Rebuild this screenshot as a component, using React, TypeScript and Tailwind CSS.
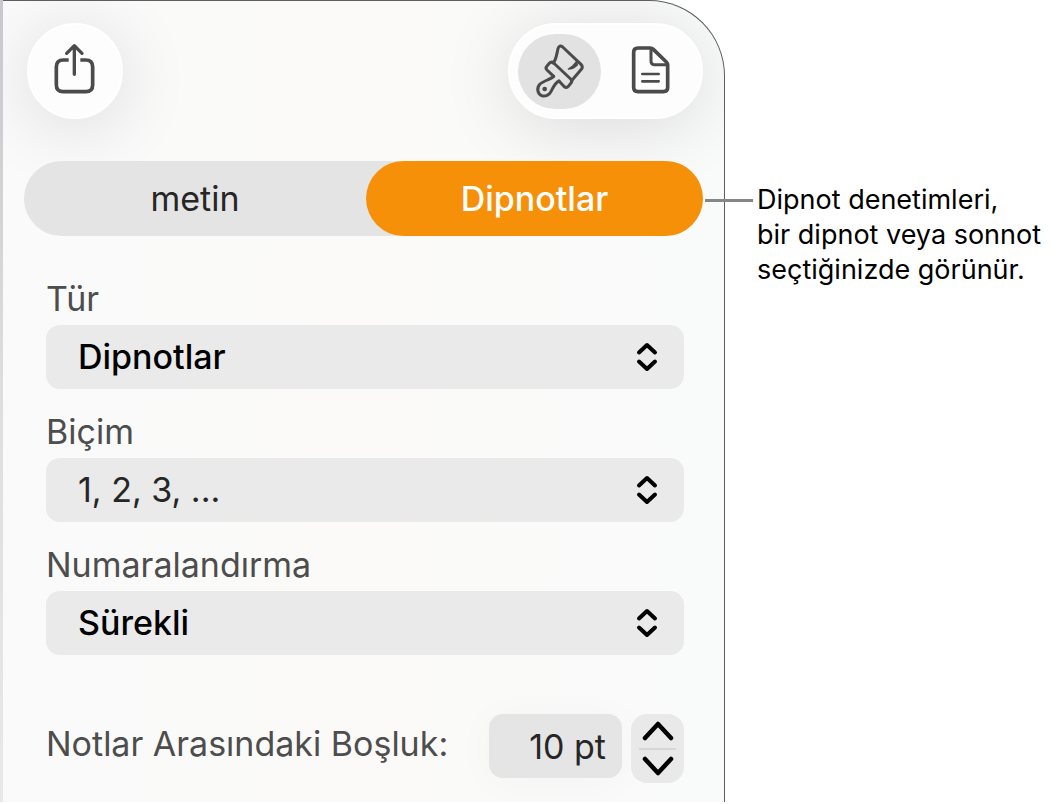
import React, { useState } from "react";

const ShareIcon = () => (
  <svg
    viewBox="162 129 126 168"
    className="w-[42px] h-[56px]"
    fill="none"
    stroke="#4b4b4b"
    strokeWidth="11"
    strokeLinecap="round"
    strokeLinejoin="round"
    aria-hidden="true">
    <path
      d="M206 180H190Q169 180 169 201V254Q169 275 190 275H257Q278 275 278 254V201Q278 180 257 180H241"
      strokeLinecap="butt"
    />
    <path d="M223 223V138M200 160L223 137L246 160" strokeWidth="10" />
  </svg>
);

const BrushIcon = () => (
  <svg
    viewBox="135 130 150 165"
    className="w-[50px] h-[55px]"
    fill="none"
    stroke="#4b4b4b"
    strokeWidth="9"
    strokeLinecap="round"
    strokeLinejoin="round"
    aria-hidden="true">
    <path d="M190 187C199 176 200 160 204 144Q208 131 218 139L273 191Q280 198 274 206L246 239" />
    <path d="M191 227L171 208Q165 202 171 196L178 188Q184 181 191 187L242 235Q248 241 243 247L235 257Q229 264 223 258L207 241" />
    <path d="M191 227C182 236 160 241 150 250C139 261 142 279 155 285C166 289 178 283 183 273C189 261 195 246 207 241" />
    <circle cx="164" cy="265" r="7" fill="#4b4b4b" stroke="none" />
    <path d="M260 182L247 197L235 205Q250 205 262 193Z" fill="#4b4b4b" strokeWidth="4" />
  </svg>
);

const DocumentIcon = () => (
  <svg
    viewBox="423 138 120 150"
    className="w-[40px] h-[50px]"
    fill="none"
    stroke="#4b4b4b"
    strokeWidth="11"
    strokeLinecap="round"
    strokeLinejoin="round"
    aria-hidden="true">
    <path d="M444 144H481Q486 144 490 148L529 186Q533 190 533 195V262Q533 275 520 275H444Q431 275 431 262V157Q431 144 444 144Z" />
    <path d="M483 146V184Q483 194 492 194H531" strokeWidth="9" />
    <path d="M457 222H506M457 244H506" strokeWidth="8" />
  </svg>
);

const UpDownIcon = () => (
  <svg
    viewBox="0 0 22 30"
    className="pointer-events-none absolute right-[26px] top-[17px] w-[22px] h-[30px]"
    fill="none"
    stroke="#000"
    strokeWidth="4"
    strokeLinecap="round"
    strokeLinejoin="round"
    aria-hidden="true">
    <path d="M3 10.5L11 3L19 10.5M3 19.5L11 27L19 19.5" />
  </svg>
);

type SelectFieldProps = {
  id: string;
  label: string;
  options: string[];
  className?: string;
};

const SelectField = ({ id, label, options, className = "" }: SelectFieldProps) => (
  <div>
    <label
      htmlFor={id}
      className="block mb-1.5 text-[34px] leading-[40px] text-[#4d4d4d]">
      {label}
    </label>
    <div className="relative">
      <select
        id={id}
        className={`block appearance-none w-full h-16 pl-8 pr-16 rounded-[14px] bg-[#e9eae9] text-[34px] leading-[40px] ${className}`}>
        {options.map((option) => (
          <option key={option}>{option}</option>
        ))}
      </select>
      <UpDownIcon />
    </div>
  </div>
);

const Toolbar = () => (
  <div className="flex justify-between pl-[3px]">
    <button
      type="button"
      aria-label="Paylaş"
      className="flex items-center justify-center size-24 rounded-full bg-[#fdfdfd] border-2 border-white shadow-[0_8px_70px_rgba(0,0,0,0.13)]">
      <ShareIcon />
    </button>
    <div className="flex items-center gap-2 h-24 px-2 rounded-full bg-[#fdfdfd] border-2 border-white shadow-[0_8px_70px_rgba(0,0,0,0.13)]">
      <button
        type="button"
        aria-label="Biçim"
        aria-pressed="true"
        className="flex items-center justify-center w-[83px] h-[75px] rounded-full bg-[#e2e2e2]">
        <BrushIcon />
      </button>
      <button
        type="button"
        aria-label="Belge"
        className="flex items-center justify-center w-[84px] h-[75px] rounded-full">
        <DocumentIcon />
      </button>
    </div>
  </div>
);

const App = () => {
  const [spacing, setSpacing] = useState(10);

  return (
    <div className="flex items-start bg-white font-['Inter','Liberation_Sans',sans-serif]">
      <div className="flex flex-1">
        <div className="w-[3px] bg-linear-to-b from-[#c8c8cd] via-[#dededf] to-[#e8e8e8]" />
        <main className="flex-1 overflow-hidden pt-[22px] pb-[19px] pl-[21px] pr-[21px] border-t border-r border-[#5e5e5e] rounded-tr-[76px] bg-linear-to-r from-[#fafafa] via-[#fbfaf9] to-[#f9fafa]">
          <Toolbar />
          <div className="relative flex mt-[42px] h-[75px] rounded-full bg-[#e4e4e4] text-[34px] leading-[40px]">
            <button type="button" className="flex-1 text-[#262626]">
              metin
            </button>
            <button
              type="button"
              className="w-[337px] rounded-full bg-[#f79009] font-medium text-white">
              Dipnotlar
            </button>
          </div>
          <div className="flex flex-col gap-[23px] mt-[43px] pl-[22px] pr-[19px]">
            <SelectField
              id="type"
              label="Tür"
              options={["Dipnotlar", "Sonnotlar"]}
              className="font-medium text-black"
            />
            <SelectField
              id="format"
              label="Biçim"
              options={["1, 2, 3, ...", "i, ii, iii, ..."]}
              className="text-[#262626]"
            />
            <SelectField
              id="numbering"
              label="Numaralandırma"
              options={["Sürekli", "Her Sayfada"]}
              className="font-medium text-black"
            />
          </div>
          <div className="flex items-start mt-[59px] pl-[22px] pr-[19px]">
            <label
              htmlFor="spacing"
              className="flex-1 pt-2.5 whitespace-nowrap text-[34px] leading-[40px] text-[#4d4d4d]">
              Notlar Arasındaki Boşluk:
            </label>
            <input
              id="spacing"
              type="text"
              readOnly
              value={`${spacing} pt`}
              className="w-[133px] h-16 pr-4 rounded-[14px] bg-[#e5e5e5] text-right text-[34px] leading-[40px] text-[#262626] shadow-[0_4px_40px_rgba(0,0,0,0.03)]"
            />
            <div className="flex flex-col items-center ml-[9px] w-[53px] h-[69px] rounded-[16px] bg-[#e9e9e9]">
              <button
                type="button"
                aria-label="Artır"
                onClick={() => setSpacing(spacing + 1)}
                className="flex-1 flex items-center justify-center w-full">
                <svg viewBox="0 0 32 20" className="w-8 h-5" fill="none" stroke="#000" strokeWidth="4.5" strokeLinecap="round" strokeLinejoin="round" aria-hidden="true">
                  <path d="M3 17L16 3L29 17" />
                </svg>
              </button>
              <div className="w-[37px] h-0.5 bg-[#d6d6d6]" />
              <button
                type="button"
                aria-label="Azalt"
                onClick={() => setSpacing(spacing - 1)}
                className="flex-1 flex items-center justify-center w-full">
                <svg viewBox="0 0 32 20" className="w-8 h-5" fill="none" stroke="#000" strokeWidth="4.5" strokeLinecap="round" strokeLinejoin="round" aria-hidden="true">
                  <path d="M3 3L16 17L29 3" />
                </svg>
              </button>
            </div>
          </div>
        </main>
      </div>
      <aside className="relative flex items-start gap-1 w-[338px] pt-[182px]">
        <div className="shrink-0 w-12 h-[3px] -ml-5 mt-[17px] bg-[#868686]" />
        <p className="whitespace-nowrap text-[27px] leading-[35px] text-black">
          Dipnot denetimleri,
          <br />
          bir dipnot veya sonnot
          <br />
          seçtiğinizde görünür.
        </p>
      </aside>
    </div>
  );
};

export default App;
